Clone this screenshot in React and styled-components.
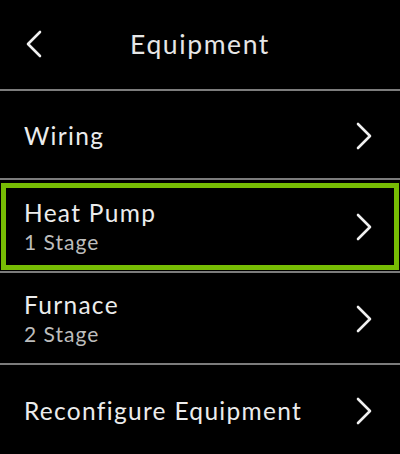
import React from "react";
import styled, { createGlobalStyle } from "styled-components";

const GlobalStyle = createGlobalStyle`
  html, body { margin: 0; padding: 0; background: #000; }
  * { box-sizing: border-box; }
`;

const Screen = styled.div`
  width: 400px;
  height: 454px;
  background: #000;
  display: flex;
  flex-direction: column;
  font-family: "Lato", "Noto Sans", sans-serif;
  color: #ececec;
  overflow: hidden;
`;

const Header = styled.header`
  height: 91px;
  flex: none;
  display: grid;
  grid-template-columns: 70px 1fr 70px;
  align-items: center;
  border-bottom: 2px solid #7c7c7c;
  padding-bottom: 1px;
`;

const BackButton = styled.button`
  background: none;
  border: none;
  padding: 0 0 0 26px;
  margin: 0;
  display: flex;
  align-items: center;
  cursor: pointer;
`;

const Title = styled.h1`
  margin: 0;
  font-weight: 400;
  font-size: 26.5px;
  letter-spacing: 1.6px;
  text-align: center;
  color: #e6e6e6;
`;

const Row = styled.div`
  height: ${(p) => p.$h}px;
  flex: none;
  border-bottom: ${(p) => (p.$last ? "none" : "2px solid #7c7c7c")};
  padding: 3px 1px 1px 1px;
  display: flex;
`;

const Inner = styled.div`
  flex: 1;
  display: flex;
  align-items: center;
  justify-content: space-between;
  border: 5px solid ${(p) => (p.$selected ? "#77bc04" : "transparent")};
  padding: 0 22px 0 18px;
`;

const Texts = styled.div`
  display: flex;
  flex-direction: column;
`;

const Label = styled.span`
  font-size: 24.5px;
  line-height: 30px;
  letter-spacing: 1.3px;
  color: #ececec;
`;

const Sub = styled.span`
  font-size: 21px;
  line-height: 28px;
  letter-spacing: 1px;
  color: #bdbdbd;
`;

const Chevron = ({ left }) => (
  <svg width="16" height="28" viewBox="0 0 16 28" fill="none">
    <polyline
      points={left ? "14,2 2,14 14,26" : "2,2 14,14 2,26"}
      stroke="#f0f0f0"
      strokeWidth="2.6"
      strokeLinecap="round"
      strokeLinejoin="round"
    />
  </svg>
);

const items = [
  { label: "Wiring", h: 89 },
  { label: "Heat Pump", sub: "1 Stage", h: 93, selected: true },
  { label: "Furnace", sub: "2 Stage", h: 92 },
  { label: "Reconfigure Equipment", h: 89, last: true },
];

export default function App() {
  return (
    <>
      <GlobalStyle />
      <Screen>
        <Header>
          <BackButton aria-label="Back">
            <Chevron left />
          </BackButton>
          <Title>Equipment</Title>
          <span />
        </Header>
        {items.map((it) => (
          <Row key={it.label} $h={it.h} $last={it.last}>
            <Inner $selected={it.selected}>
              <Texts>
                <Label>{it.label}</Label>
                {it.sub && <Sub>{it.sub}</Sub>}
              </Texts>
              <Chevron />
            </Inner>
          </Row>
        ))}
      </Screen>
    </>
  );
}
